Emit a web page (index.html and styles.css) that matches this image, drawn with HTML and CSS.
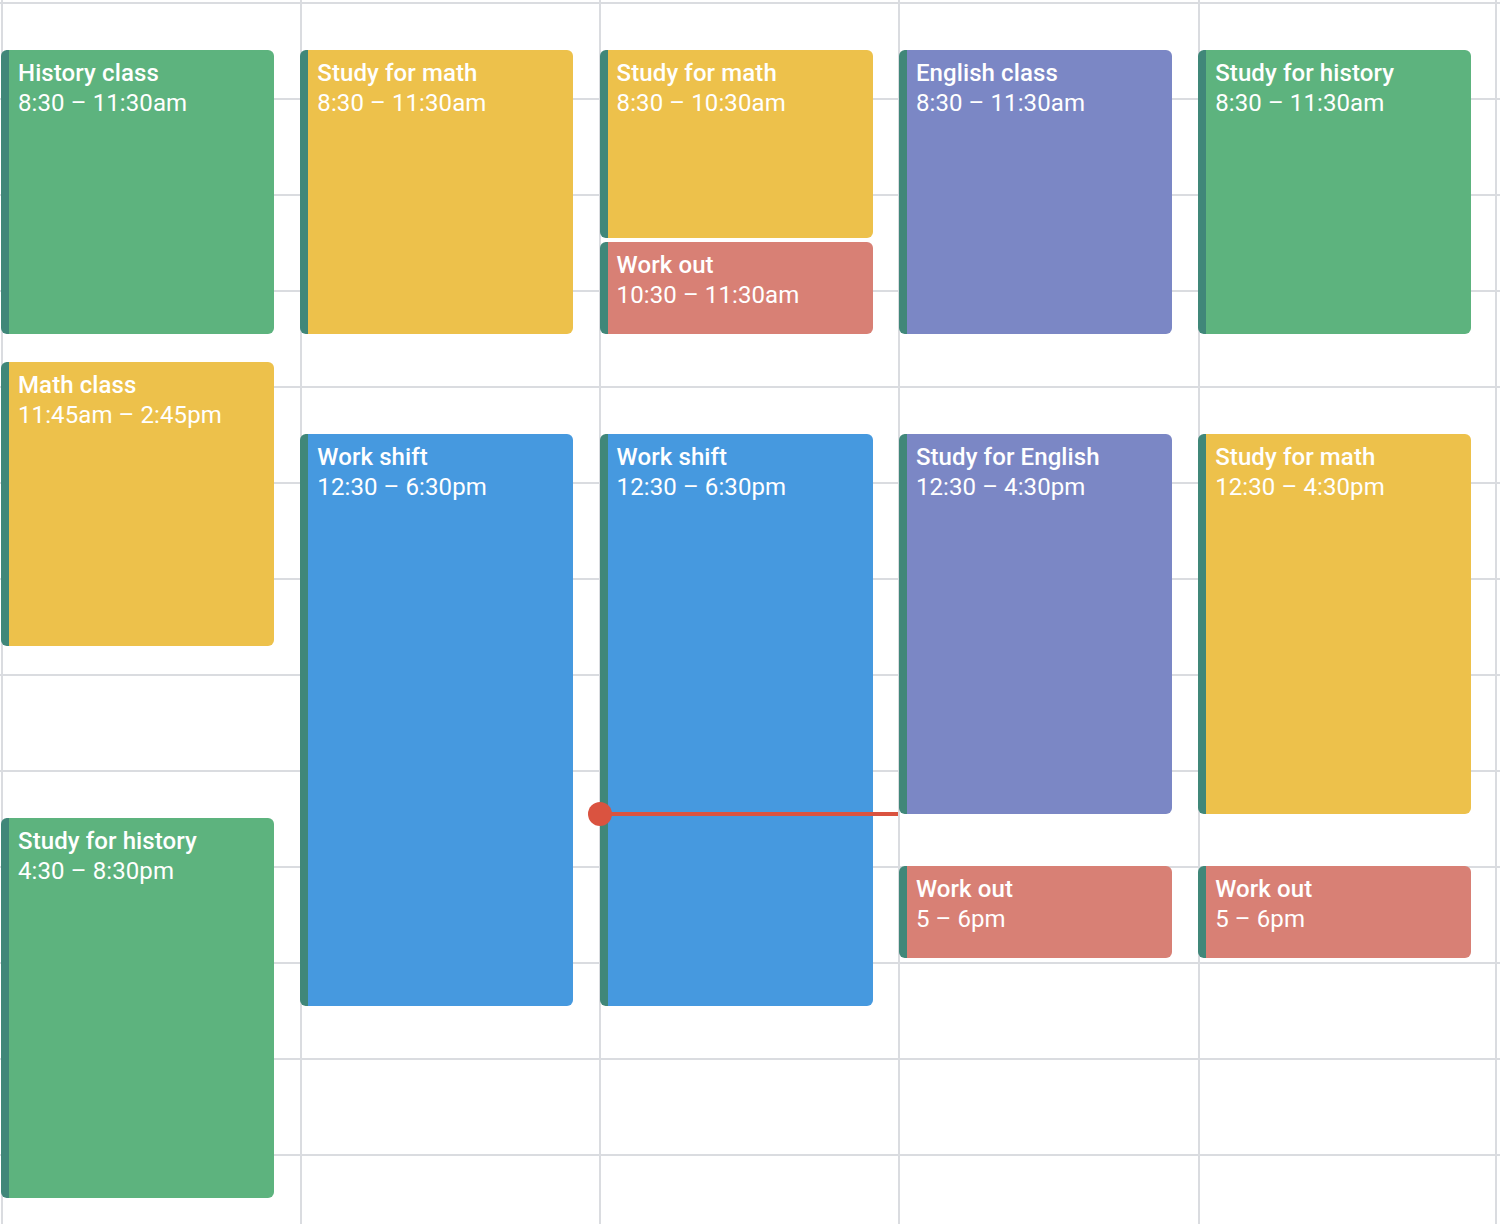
FILE: index.html
```html
<!DOCTYPE html>
<html lang="en">
<head>
<meta charset="utf-8">
<title>Week schedule</title>
<link rel="stylesheet" href="styles.css">
</head>
<body>
<div class="calendar">
  <div class="day">
    <div class="event green" style="top:50px;height:284px"><div class="title">History class</div><div class="time">8:30 – 11:30am</div></div>
    <div class="event yellow" style="top:362px;height:284px"><div class="title">Math class</div><div class="time">11:45am – 2:45pm</div></div>
    <div class="event green" style="top:818px;height:380px"><div class="title">Study for history</div><div class="time">4:30 – 8:30pm</div></div>
  </div>
  <div class="day">
    <div class="event yellow" style="top:50px;height:284px"><div class="title">Study for math</div><div class="time">8:30 – 11:30am</div></div>
    <div class="event blue" style="top:434px;height:572px"><div class="title">Work shift</div><div class="time">12:30 – 6:30pm</div></div>
  </div>
  <div class="day">
    <div class="event yellow" style="top:50px;height:188px"><div class="title">Study for math</div><div class="time">8:30 – 10:30am</div></div>
    <div class="event red" style="top:242px;height:92px"><div class="title">Work out</div><div class="time">10:30 – 11:30am</div></div>
    <div class="event blue" style="top:434px;height:572px"><div class="title">Work shift</div><div class="time">12:30 – 6:30pm</div></div>
    <div class="now" style="top:812px"><span class="now-dot"></span></div>
  </div>
  <div class="day">
    <div class="event purple" style="top:50px;height:284px"><div class="title">English class</div><div class="time">8:30 – 11:30am</div></div>
    <div class="event purple" style="top:434px;height:380px"><div class="title">Study for English</div><div class="time">12:30 – 4:30pm</div></div>
    <div class="event red" style="top:866px;height:92px"><div class="title">Work out</div><div class="time">5 – 6pm</div></div>
  </div>
  <div class="day last">
    <div class="event green" style="top:50px;height:284px"><div class="title">Study for history</div><div class="time">8:30 – 11:30am</div></div>
    <div class="event yellow" style="top:434px;height:380px"><div class="title">Study for math</div><div class="time">12:30 – 4:30pm</div></div>
    <div class="event red" style="top:866px;height:92px"><div class="title">Work out</div><div class="time">5 – 6pm</div></div>
  </div>
</div>
</body>
</html>
```
FILE: styles.css
```css
html, body {
  margin: 0;
  padding: 0;
  background: #ffffff;
}
body {
  width: 1500px;
  height: 1224px;
  overflow: hidden;
  font-family: Roboto, "Noto Sans", "Liberation Sans", sans-serif;
}
.calendar {
  display: grid;
  grid-template-columns: repeat(5, 299.3px);
  padding-left: 0.5px;
  height: 1224px;
  background-image: linear-gradient(#dadce0 0, #dadce0 2px, transparent 2px);
  background-size: 100% 96px;
  background-position: 0 2px;
  background-repeat: repeat-y;
}
.day {
  position: relative;
  border-left: 2px solid #dadce0;
}
.day.last {
  border-right: 2px solid #dadce0;
}
.event {
  position: absolute;
  left: -1.5px;
  width: 273px;
  box-sizing: border-box;
  border-left: 8px solid #408779;
  border-radius: 6px;
  padding: 8px 8px 0 9px;
  color: #ffffff;
  font-size: 24px;
  line-height: 30px;
  letter-spacing: 0.1px;
  white-space: nowrap;
  overflow: hidden;
}
.title {
  font-weight: 500;
}
.time {
  font-weight: 400;
}
.green { background: #5db37e; }
.yellow { background: #edc14b; }
.purple { background: #7b87c5; }
.red { background: #d88075; }
.blue { background: #4699df; }
.now {
  position: absolute;
  left: -1.5px;
  width: 300.5px;
  height: 4px;
  background: #da5340;
}
.now-dot {
  position: absolute;
  left: -12px;
  top: -10px;
  width: 24px;
  height: 24px;
  border-radius: 50%;
  background: #da5340;
}
```
